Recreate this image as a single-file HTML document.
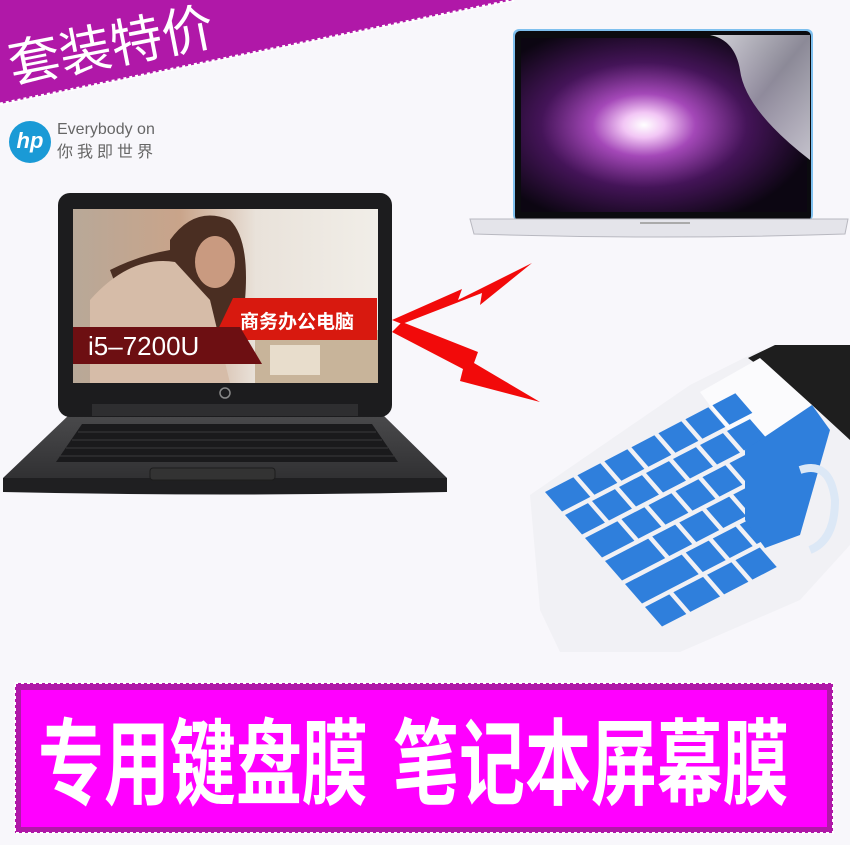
<!DOCTYPE html>
<html><head><meta charset="utf-8">
<style>
html,body{margin:0;padding:0}
body{width:850px;height:845px;position:relative;overflow:hidden;background:#f8f7fb;font-family:"Liberation Sans","Noto Sans CJK SC",sans-serif}
.abs{position:absolute}
</style></head><body>

<svg class="abs" style="left:0;top:0" width="850" height="845">
  <defs>
    <radialGradient id="burst" cx="0.43" cy="0.5" r="0.6">
      <stop offset="0" stop-color="#ffffff"/>
      <stop offset="0.12" stop-color="#f2c6f5"/>
      <stop offset="0.3" stop-color="#a448b8"/>
      <stop offset="0.6" stop-color="#441458"/>
      <stop offset="1" stop-color="#0c0612"/>
    </radialGradient>
    <linearGradient id="peel" x1="0" y1="0" x2="1" y2="1">
      <stop offset="0" stop-color="#e8e8ee"/>
      <stop offset="0.5" stop-color="#9a98a6"/>
      <stop offset="1" stop-color="#d8d6e0"/>
    </linearGradient>
    <linearGradient id="photo" x1="0" y1="0" x2="1" y2="0">
      <stop offset="0" stop-color="#b8a898"/>
      <stop offset="0.35" stop-color="#c9a48a"/>
      <stop offset="0.6" stop-color="#e9e2da"/>
      <stop offset="1" stop-color="#f1eee8"/>
    </linearGradient>
    <linearGradient id="base" x1="0" y1="0" x2="0" y2="1">
      <stop offset="0" stop-color="#4a4a4c"/>
      <stop offset="1" stop-color="#2c2c2e"/>
    </linearGradient>
  </defs>
  <polygon points="0,0 514,0 0,104" fill="#b018a8"/>
  <line x1="0" y1="104" x2="514" y2="0" stroke="#fff" stroke-width="3" stroke-dasharray="3 3"/>

  <!-- MacBook -->
  <rect x="513" y="29" width="300" height="192" rx="6" fill="#7fc0ee"/>
  <rect x="515" y="31" width="296" height="190" rx="5" fill="#0b0b0f"/>
  <rect x="521" y="38" width="286" height="174" fill="url(#burst)"/>
  <path d="M710,35 Q735,40 740,70 Q745,110 810,160 L810,35 Z" fill="url(#peel)" opacity="0.9"/>
  <path d="M470,219 L848,219 L845,234 Q660,240 474,234 Z" fill="#e4e4ea" stroke="#b8b8c0"/>
  <rect x="640" y="222" width="50" height="2" fill="#aaa"/>

  <!-- HP laptop -->
  <path d="M70,414 L382,414 L447,478 L447,490 L3,490 L3,478 Z" fill="url(#base)"/>
  <path d="M3,478 L447,478 L447,492 Q225,497 3,492 Z" fill="#1f1f21"/>
  <path d="M82,424 L372,424 L398,462 L56,462 Z" fill="#1a1a1c"/>
  <g stroke="#3a3a3c" stroke-width="1">
    <line x1="78" y1="432" x2="376" y2="432"/><line x1="72" y1="440" x2="382" y2="440"/>
    <line x1="66" y1="448" x2="388" y2="448"/><line x1="60" y1="456" x2="394" y2="456"/>
  </g>
  <rect x="150" y="468" width="125" height="12" rx="3" fill="#333" stroke="#1c1c1c"/>
  <rect x="58" y="193" width="334" height="224" rx="12" fill="#1c1c1e"/>
  <rect x="92" y="404" width="266" height="12" fill="#2e2e30"/>
  <rect x="73" y="209" width="305" height="174" fill="url(#photo)"/>
  <path d="M170,240 Q195,205 230,220 Q250,240 245,300 L230,330 L150,330 Q120,300 110,270 Q140,255 170,250 Z" fill="#4a2e22"/>
  <ellipse cx="215" cy="262" rx="20" ry="26" fill="#c99a80"/>
  <path d="M90,300 Q130,255 175,262 L210,300 L230,383 L90,383 Z" fill="#d6bca8"/>
  <rect x="255" y="330" width="123" height="53" fill="#c8b49a"/>
  <rect x="270" y="345" width="50" height="30" fill="#e8ddcc"/>
  <polygon points="233,298 377,298 377,340 213,340" fill="#d8190f"/>
  <text x="240" y="328" font-size="19" font-weight="bold" fill="#fff" font-family="'Noto Sans CJK SC',sans-serif">商务办公电脑</text>
  <polygon points="73,327 240,327 262,364 73,364" fill="#6d0f12"/>
  <text x="88" y="355" font-size="26" fill="#fff" font-family="'Liberation Sans',sans-serif">i5–7200U</text>
  <circle cx="225" cy="393" r="5" fill="none" stroke="#888" stroke-width="1.5"/>

  <!-- red arrows -->
  <polygon points="392,320 462,289 458,300 532,263 480,305 482,293 402,324" fill="#f20a0a"/>
  <polygon points="402,322 478,352 474,363 540,402 460,381 463,369 392,332" fill="#f20a0a"/>

  <!-- keyboard skin -->
  <polygon points="530,495 690,385 760,350 850,345 850,545 800,600 680,652 560,652 540,610" fill="#f1f1f5"/>
  <polygon points="748,358 775,345 850,345 850,440 812,405" fill="#1e1e1e"/>
  <polygon points="700,392 760,358 812,405 820,440 780,470 735,440" fill="#fbfbfd"/>
  <g fill="#2f7fdc" transform="matrix(27,-14,20,23,545,492)">
    <rect x="0" y="0" width="1.05" height="0.85"/><rect x="1.2" y="0" width="0.85" height="0.85"/><rect x="2.2" y="0" width="0.85" height="0.85"/><rect x="3.2" y="0" width="0.85" height="0.85"/><rect x="4.2" y="0" width="0.85" height="0.85"/><rect x="5.2" y="0" width="0.85" height="0.85"/><rect x="6.2" y="0" width="0.85" height="0.85"/>
    <rect x="0" y="1" width="0.85" height="0.85"/><rect x="1" y="1" width="0.85" height="0.85"/><rect x="2" y="1" width="0.85" height="0.85"/><rect x="3" y="1" width="0.85" height="0.85"/><rect x="4" y="1" width="0.85" height="0.85"/><rect x="5" y="1" width="0.85" height="0.85"/><rect x="6" y="1" width="0.85" height="0.85"/>
    <rect x="0" y="2" width="1.2" height="0.85"/><rect x="1.35" y="2" width="0.85" height="0.85"/><rect x="2.35" y="2" width="0.85" height="0.85"/><rect x="3.35" y="2" width="0.85" height="0.85"/><rect x="4.35" y="2" width="0.85" height="0.85"/><rect x="5.35" y="2" width="0.85" height="0.85"/>
    <rect x="0" y="3" width="1.6" height="0.85"/><rect x="1.75" y="3" width="0.85" height="0.85"/><rect x="2.75" y="3" width="0.85" height="0.85"/><rect x="3.75" y="3" width="0.85" height="0.85"/><rect x="4.75" y="3" width="0.85" height="0.85"/>
    <rect x="0" y="4" width="2.1" height="0.85"/><rect x="2.25" y="4" width="0.85" height="0.85"/><rect x="3.25" y="4" width="0.85" height="0.85"/><rect x="4.25" y="4" width="0.85" height="0.85"/>
    <rect x="0" y="5" width="0.9" height="0.85"/><rect x="1.05" y="5" width="1.1" height="0.85"/><rect x="2.3" y="5" width="0.9" height="0.85"/><rect x="3.35" y="5" width="0.9" height="0.85"/>
  </g>
  <polygon points="745,450 812,405 830,430 800,535 765,548 745,520" fill="#2f7fdc"/>
  <path d="M800,470 Q830,460 835,500 Q835,540 810,550" fill="none" stroke="#dce8f6" stroke-width="8"/>

  <!-- bottom banner -->
  <rect x="15" y="683" width="818" height="150" fill="#b018a8"/>
  <rect x="15" y="683" width="818" height="150" fill="none" stroke="#fff" stroke-width="2" stroke-dasharray="3 3"/>
  <rect x="21" y="690" width="806" height="137" fill="#ff00ff"/>
</svg>

<div class="abs" style="left:8px;top:32px;font-size:52px;color:#fff;font-family:'Noto Sans CJK SC',sans-serif;transform:rotate(-11deg);transform-origin:0 50%;white-space:nowrap;line-height:60px">套装特价</div>

<div class="abs" style="left:9px;top:121px;width:42px;height:42px;border-radius:50%;background:#1a9ad6;color:#fff;font:italic bold 22px 'Liberation Sans',sans-serif;text-align:center;line-height:40px">hp</div>
<div class="abs" style="left:57px;top:121px;font-size:16px;color:#666;line-height:18px">Everybody on</div>
<div class="abs" style="left:57px;top:141px;font-size:16px;color:#666;letter-spacing:4px;line-height:18px;font-family:'Noto Sans CJK SC',sans-serif">你我即世界</div>

<div class="abs" style="left:38px;top:712px;font-size:68px;font-weight:bold;color:#fff;white-space:nowrap;line-height:90px;font-family:'Noto Sans CJK SC',sans-serif;transform:scale(0.97,1.38);transform-origin:0 50%">专用键盘膜<span style="display:inline-block;width:26px"></span>笔记本屏幕膜</div>

</body></html>
